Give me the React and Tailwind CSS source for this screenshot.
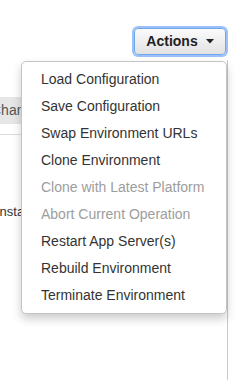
import React from 'react';

const items = [
    { label: 'Load Configuration' },
    { label: 'Save Configuration' },
    { label: 'Swap Environment URLs' },
    { label: 'Clone Environment' },
    { label: 'Clone with Latest Platform', disabled: true },
    { label: 'Abort Current Operation', disabled: true },
    { label: 'Restart App Server(s)' },
    { label: 'Rebuild Environment' },
    { label: 'Terminate Environment' },
];

export default function App() {
    return (
        <div className="relative w-[245px] h-[380px] overflow-hidden bg-white font-['Liberation_Sans',Arial,sans-serif] flex flex-col">
            {/* Header with actions button */}
            <div className="flex-none h-[60px] flex justify-end items-start pt-[28px] pr-[19px]">
                <button className="w-[92px] h-[27px] rounded-[4px] border border-[#6fa6ee] bg-gradient-to-b from-[#fbfbfb] to-[#e2e2e2] shadow-[0_0_0_2px_rgba(122,172,245,0.75)] flex items-center justify-center gap-[8px] text-[14px] font-bold text-[#222]">
                    <span>Actions</span>
                    <svg width="8" height="5" viewBox="0 0 8 5"><path d="M0 0H8L4 4.5Z" fill="#222" /></svg>
                </button>
            </div>

            {/* Panel behind the menu */}
            <div className="flex-1 w-[228px] border-r border-[#c8c8c8] flex flex-col">
                <div className="h-[37px]" />
                <div className="h-[27px] bg-[#e6e6e6] flex items-center justify-between">
                    <span className="-ml-[9px] text-[14px] text-[#555]">Change</span>
                    <div className="w-[2px] h-[25px] bg-[#2d5a9e]" />
                </div>
                <div className="h-[10px]" />
                <div className="h-px bg-[#dcdcdc]" />
                <div className="h-[69px]" />
                <div className="text-[13px] text-[#333] -ml-[4px] leading-[16px]">Instances</div>
            </div>

            {/* Dropdown menu */}
            <div className="absolute left-[21px] top-[61px] w-[206px] bg-white border border-[#c4c4c4] rounded-[5px] py-[4px] shadow-[0_5px_10px_rgba(0,0,0,0.2)]">
                {items.map(item => (
                    <div
                        key={item.label}
                        className={`h-[27px] pl-[19px] text-[14px] leading-[27px] whitespace-nowrap ${item.disabled ? 'text-[#9d9d9d]' : 'text-[#333]'}`}
                    >
                        {item.label}
                    </div>
                ))}
            </div>
        </div>
    );
}
